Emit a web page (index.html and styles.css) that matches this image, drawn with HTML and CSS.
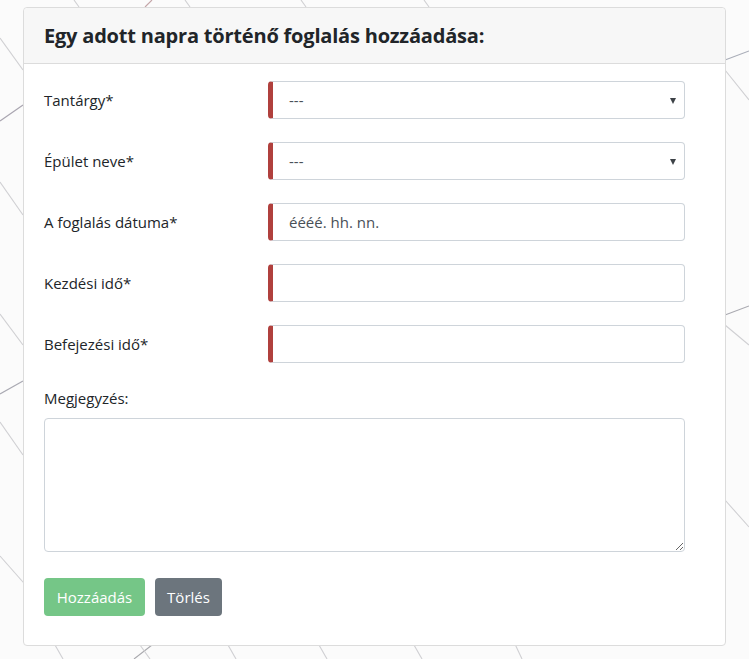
FILE: index.html
```html
<!DOCTYPE html>
<html lang="hu">
<head>
<meta charset="utf-8">
<title>Foglalás</title>
<link rel="stylesheet" href="styles.css">
</head>
<body>
<svg class="bg" width="749" height="659" viewBox="0 0 749 659">
  <g stroke="#cfcfd2" stroke-width="1.1" fill="none">
    <line x1="0" y1="38" x2="23" y2="70"/>
    <line x1="0" y1="121" x2="23" y2="105" stroke="#a9a5b0"/>
    <line x1="0" y1="182" x2="23" y2="215"/>
    <line x1="0" y1="314" x2="23" y2="345"/>
    <line x1="0" y1="394" x2="23" y2="381" stroke="#a9a9b2"/>
    <line x1="0" y1="422" x2="23" y2="455"/>
    <line x1="0" y1="556" x2="30" y2="590"/>
    <line x1="74" y1="0" x2="79" y2="7"/>
    <line x1="145" y1="7" x2="152" y2="0" stroke="#c4a5a8"/>
    <line x1="185" y1="0" x2="190" y2="7"/>
    <line x1="301" y1="0" x2="306" y2="7"/>
    <line x1="424" y1="0" x2="429" y2="7"/>
    <line x1="55" y1="645" x2="63" y2="659"/>
    <line x1="134" y1="659" x2="152" y2="645" stroke="#a8a8ad"/>
    <line x1="140" y1="645" x2="150" y2="659"/>
    <line x1="228" y1="645" x2="236" y2="659"/>
    <line x1="319" y1="645" x2="327" y2="659"/>
    <line x1="414" y1="645" x2="422" y2="659"/>
    <line x1="506" y1="625" x2="522" y2="659"/>
    <line x1="725" y1="60" x2="749" y2="51" stroke="#a9adb8"/>
    <line x1="725" y1="70" x2="749" y2="100"/>
    <line x1="725" y1="315" x2="749" y2="306" stroke="#a9a9b0"/>
    <line x1="725" y1="325" x2="749" y2="345"/>
    <line x1="725" y1="500" x2="749" y2="527"/>
  </g>
</svg>
<div class="card">
  <div class="card-header">
    <h5 class="title">Egy adott napra történő foglalás hozzáadása:</h5>
  </div>
  <div class="card-body">
    <div class="row">
      <label class="lbl">Tantárgy*</label>
      <div class="ctrl req select"><span class="ph">---</span><span class="caret"></span></div>
    </div>
    <div class="row">
      <label class="lbl">Épület neve*</label>
      <div class="ctrl req select"><span class="ph">---</span><span class="caret"></span></div>
    </div>
    <div class="row">
      <label class="lbl">A foglalás dátuma*</label>
      <div class="ctrl req"><span class="ph date">éééé. hh. nn.</span></div>
    </div>
    <div class="row">
      <label class="lbl">Kezdési idő*</label>
      <div class="ctrl req"></div>
    </div>
    <div class="row">
      <label class="lbl">Befejezési idő*</label>
      <div class="ctrl req"></div>
    </div>
    <div class="note">
      <label class="lbl">Megjegyzés:</label>
      <textarea class="area"></textarea>
    </div>
    <div class="buttons">
      <button class="btn btn-add">Hozzáadás</button>
      <button class="btn btn-del">Törlés</button>
    </div>
  </div>
</div>
</body>
</html>
```

FILE: styles.css
```css
html, body {
  margin: 0;
  padding: 0;
}
body {
  width: 749px;
  height: 659px;
  background: #fbfbfb;
  font-family: "Open Sans", "Segoe UI", sans-serif;
  font-size: 15px;
  color: #212529;
  overflow: hidden;
  position: relative;
}
.bg {
  position: absolute;
  left: 0;
  top: 0;
}
.card {
  position: relative;
  margin: 7px 0 0 23px;
  width: 701px;
  height: 637px;
  background: #fff;
  border: 1px solid #dcdcdc;
  border-radius: 4px;
  box-sizing: content-box;
}
.card-header {
  height: 56px;
  box-sizing: border-box;
  background: #f7f7f7;
  border-bottom: 1px solid #dcdcdc;
  border-radius: 4px 4px 0 0;
  padding: 0 20px;
  display: flex;
  align-items: center;
}
.title {
  margin: 0;
  font-size: 20px;
  font-weight: 700;
  color: #212529;
  letter-spacing: -0.2px;
}
.card-body {
  padding: 17px 20px 0 20px;
  display: flex;
  flex-direction: column;
}
.row {
  display: flex;
  align-items: center;
  height: 38px;
  margin-bottom: 23px;
}
.lbl {
  width: 224px;
  flex: none;
  line-height: 24px;
}
.ctrl {
  position: relative;
  width: 417px;
  height: 38px;
  box-sizing: border-box;
  border: 1px solid #ced4da;
  border-radius: 4px;
  display: flex;
  align-items: center;
  padding-left: 16px;
}
.req {
  border-left: 5px solid #b0403d;
}
.ph {
  color: #495057;
  font-size: 15px;
}
.caret {
  position: absolute;
  right: 8px;
  top: 16px;
  width: 0;
  height: 0;
  border-left: 3px solid transparent;
  border-right: 3px solid transparent;
  border-top: 6px solid #3d4247;
}
.note {
  display: flex;
  flex-direction: column;
}
.note .lbl {
  margin-bottom: 8px;
}
.area {
  width: 641px;
  height: 134px;
  box-sizing: border-box;
  border: 1px solid #ced4da;
  border-radius: 4px;
  margin: 0;
  padding: 6px 12px;
  font-family: inherit;
}
.buttons {
  display: flex;
  gap: 10px;
  margin-top: 26px;
}
.btn {
  height: 38px;
  border: none;
  border-radius: 4px;
  color: #fff;
  font-family: "Open Sans", sans-serif;
  font-size: 15px;
  padding: 0 12px;
  margin: 0;
}
.btn-add {
  width: 101px;
  background: #75c687;
}
.btn-del {
  width: 67px;
  background: #6c757d;
}
```
